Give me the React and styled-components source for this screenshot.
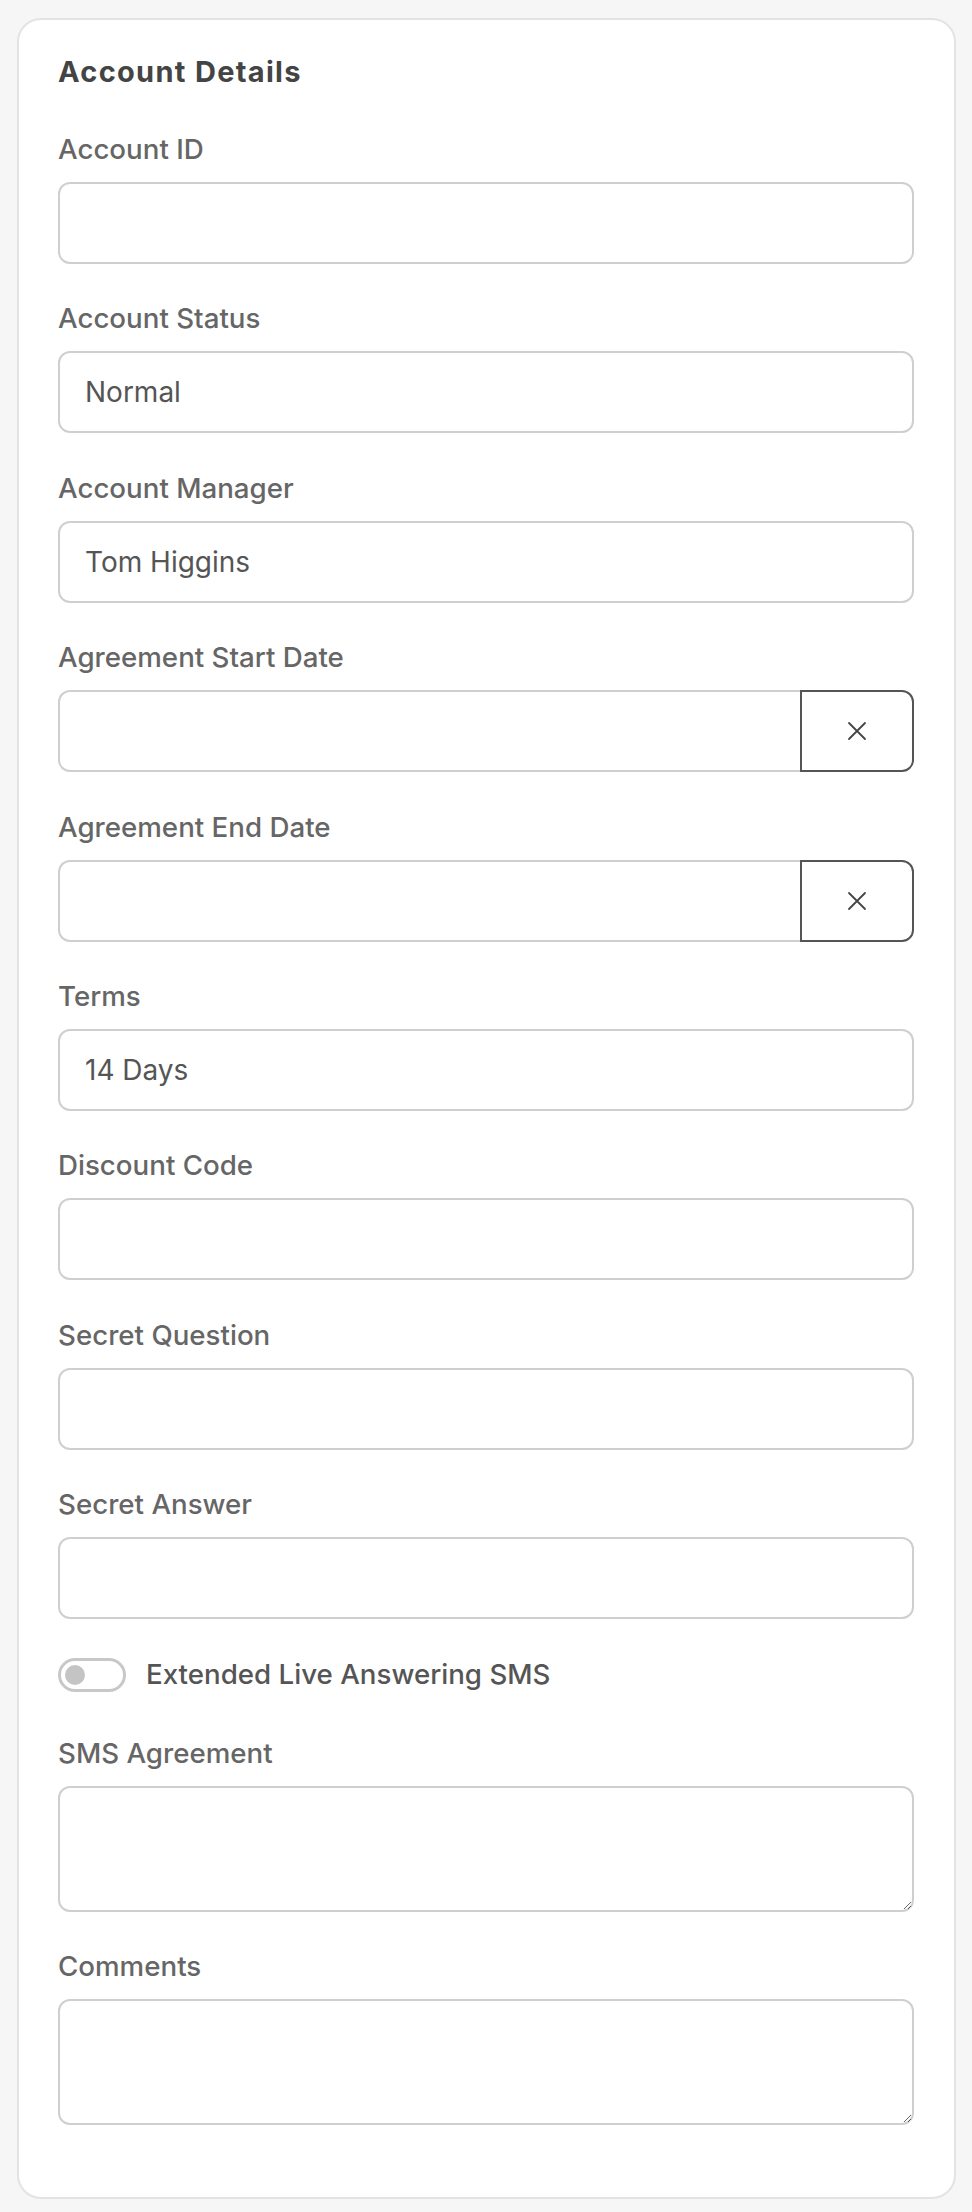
import React from "react";
import styled, { createGlobalStyle } from "styled-components";

const Global = createGlobalStyle`
  html, body { margin: 0; padding: 0; background: #f6f6f6; }
  body { font-family: Inter, "Liberation Sans", sans-serif; }
  * { box-sizing: border-box; }
`;

const Page = styled.div`
  padding: 18px 16px 15px 17px;
`;

const Card = styled.section`
  background: #fff;
  border: 2px solid #e3e3e3;
  border-radius: 24px;
  padding: 35px 40px 72px 39px;
`;

const Heading = styled.h2`
  margin: 0 0 42px;
  font-family: Inter, "Liberation Sans", sans-serif;
  font-weight: 700;
  font-size: 29px;
  letter-spacing: 1.3px;
  line-height: 34px;
  color: #444;
`;

const Fields = styled.div`
  display: flex;
  flex-direction: column;
  gap: 36.4px;
`;

const Field = styled.div`
  display: flex;
  flex-direction: column;
`;

const Label = styled.label`
  font-size: 27.7px;
  font-weight: 500;
  line-height: 33px;
  color: #666;
  padding-top: 2px;
  margin-bottom: 16px;
`;

const Input = styled.input`
  width: 100%;
  height: 82px;
  border: 2px solid #cfcfcf;
  border-radius: ${(p) => (p.$joined ? "12px 0 0 12px" : "12px")};
  border-right: ${(p) => (p.$joined ? "none" : "2px solid #cfcfcf")};
  padding: 0 25px;
  font-family: Inter, "Liberation Sans", sans-serif;
  font-size: 28px;
  color: #555;
  background: #fff;
  outline: none;
`;

const Area = styled.textarea`
  display: block;
  width: 100%;
  height: 126px;
  border: 2px solid #cfcfcf;
  border-radius: 12px;
  padding: 20px 25px;
  font-family: Inter, "Liberation Sans", sans-serif;
  font-size: 28px;
  color: #555;
  background: #fff;
  outline: none;
`;

const DateRow = styled.div`
  display: flex;
`;

const ClearButton = styled.button`
  flex: 0 0 114px;
  height: 82px;
  border: 2px solid #555;
  border-radius: 0 12px 12px 0;
  background: #fff;
  display: flex;
  align-items: center;
  justify-content: center;
  padding: 0;
  cursor: pointer;
`;

const ToggleRow = styled.div`
  display: flex;
  align-items: center;
  gap: 20px;
  margin: 2px 0 7px;
`;

const Switch = styled.span`
  position: relative;
  flex: 0 0 68px;
  height: 34px;
  border: 3px solid #c8c8c8;
  border-radius: 17px;
  background: #fff;
`;

const Knob = styled.span`
  position: absolute;
  left: 4px;
  top: 4px;
  width: 20px;
  height: 20px;
  border-radius: 50%;
  background: #c4c4c4;
`;

const ToggleText = styled.span`
  font-size: 27.7px;
  font-weight: 500;
  line-height: 33px;
  color: #555;
`;

const XIcon = () => (
  <svg width="20" height="20" viewBox="0 0 20 20" fill="none">
    <path d="M2 2 L18 18 M18 2 L2 18" stroke="#444" strokeWidth="1.8" strokeLinecap="round" />
  </svg>
);

const TextField = ({ label, value }) => (
  <Field>
    <Label>{label}</Label>
    <Input defaultValue={value} />
  </Field>
);

const DateField = ({ label }) => (
  <Field>
    <Label>{label}</Label>
    <DateRow>
      <Input $joined />
      <ClearButton aria-label="Clear">
        <XIcon />
      </ClearButton>
    </DateRow>
  </Field>
);

const AreaField = ({ label }) => (
  <Field>
    <Label>{label}</Label>
    <Area />
  </Field>
);

export default function App() {
  return (
    <Page>
      <Global />
      <Card>
        <Heading>Account Details</Heading>
        <Fields>
          <TextField label="Account ID" value="" />
          <TextField label="Account Status" value="Normal" />
          <TextField label="Account Manager" value="Tom Higgins" />
          <DateField label="Agreement Start Date" />
          <DateField label="Agreement End Date" />
          <TextField label="Terms" value="14 Days" />
          <TextField label="Discount Code" value="" />
          <TextField label="Secret Question" value="" />
          <TextField label="Secret Answer" value="" />
          <ToggleRow>
            <Switch>
              <Knob />
            </Switch>
            <ToggleText>Extended Live Answering SMS</ToggleText>
          </ToggleRow>
          <AreaField label="SMS Agreement" />
          <AreaField label="Comments" />
        </Fields>
      </Card>
    </Page>
  );
}
